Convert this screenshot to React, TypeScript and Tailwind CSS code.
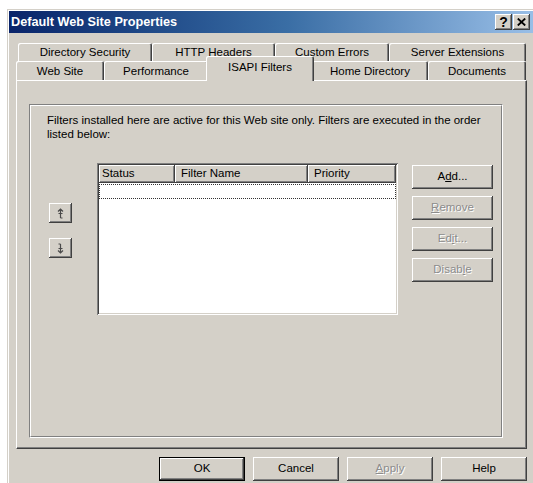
import React from "react";

// 3D bevels used by the classic dialog controls
const RAISED =
	"shadow-[inset_-1px_-1px_#404040,inset_1px_1px_#ffffff,inset_-2px_-2px_#808080]";
const DEFAULT_BTN =
	"shadow-[inset_0_0_0_1px_#000000,inset_-2px_-2px_#404040,inset_2px_2px_#ffffff,inset_-3px_-3px_#808080]";
const SUNKEN =
	"shadow-[inset_1px_1px_#808080,inset_-1px_-1px_#ffffff,inset_2px_2px_#404040,inset_-2px_-2px_#d4d0c8]";
const DISABLED = "text-[#8c8c8c] [text-shadow:1px_1px_0_#ffffff]";

const BACK_TABS = [
	{ label: "Directory Security", w: "w-[134px]" },
	{ label: "HTTP Headers", w: "w-[123px]" },
	{ label: "Custom Errors", w: "w-[114px]" },
	{ label: "Server Extensions", w: "w-[137px]" },
];

const FRONT_TABS = [
	{ label: "Web Site", w: "w-[88px]" },
	{ label: "Performance", w: "w-[104px]" },
	{ label: "ISAPI Filters", w: "w-[104px]", active: true },
	{ label: "Home Directory", w: "w-[116px]" },
	{ label: "Documents", w: "w-[98px]" },
];

function Tab({ label, w, active }: { label: string; w: string; active?: boolean }) {
	if (active) {
		return (
			<div
				className={`${w} relative z-10 -mx-[2px] -mt-[2px] -mb-px h-[22px] box-content px-[2px] bg-[#d4d0c8] rounded-t-[2px] shadow-[inset_1px_1px_#ffffff,inset_-1px_0_#404040,inset_-2px_0_#808080] flex justify-center pt-[3px]`}
			>
				{label}
			</div>
		);
	}
	return (
		<div
			className={`${w} h-full bg-[#d4d0c8] rounded-t-[2px] shadow-[inset_1px_1px_#ffffff,inset_-1px_0_#404040,inset_-2px_0_#808080] flex items-center justify-center pt-[2px]`}
		>
			{label}
		</div>
	);
}

function Btn({
	children,
	className = "",
	disabled,
	isDefault,
}: {
	children: React.ReactNode;
	className?: string;
	disabled?: boolean;
	isDefault?: boolean;
}) {
	return (
		<div
			className={`h-[24px] flex items-center justify-center bg-[#d4d0c8] ${isDefault ? DEFAULT_BTN : RAISED} ${disabled ? DISABLED : "text-black"} ${className}`}
		>
			{children}
		</div>
	);
}

function Arrow({ down }: { down?: boolean }) {
	return (
		<svg width="7" height="11" viewBox="0 0 7 11" className={down ? "rotate-180" : ""}>
			<path
				d="M3.5 1 V10 M1 3.5 L3.5 1 L6 3.5 M1.5 5.5 H5.5 M3.5 10 H5.5"
				stroke="#4a4a4a"
				strokeWidth="1.2"
				fill="none"
			/>
		</svg>
	);
}

function CaptionButton({ children }: { children: React.ReactNode }) {
	return (
		<div
			className={`w-[17px] h-[16px] bg-[#d4d0c8] ${RAISED} flex items-center justify-center text-[14px] font-bold leading-none text-black`}
		>
			{children}
		</div>
	);
}

export default function App() {
	return (
		<div className="w-[533px] h-[483px] overflow-hidden bg-white pt-[9px] pl-[7px] font-['Liberation_Sans',Arial,sans-serif] text-[11.5px] text-black">
			<div className="w-[560px] h-[520px] bg-[#d4d0c8] border-l border-t border-[#d4d0c8]">
				<div className="h-full border-l border-t border-white">
					{/* Caption */}
					<div className="h-[22px] bg-linear-to-r from-[#0a246a] via-[#3a6ea5] to-[#a6caf0] flex items-center pl-[2px] pr-[37px]">
						<span className="text-white font-bold text-[12.7px] pt-[2px]">Default Web Site Properties</span>
						<div className="ml-auto flex gap-[1px]">
							<CaptionButton>?</CaptionButton>
							<CaptionButton>
								<svg width="9" height="8" viewBox="0 0 9 8">
									<path d="M0.8 0.5 L8.2 7.5 M8.2 0.5 L0.8 7.5" stroke="#000" strokeWidth="1.8" />
								</svg>
							</CaptionButton>
						</div>
					</div>

					{/* Tab strip */}
					<div className="pt-[10px]">
						<div className="ml-[9px] h-[18px] flex">
							{BACK_TABS.map((t) => (
								<Tab key={t.label} label={t.label} w={t.w} />
							))}
						</div>
						<div className="ml-[7px] h-[19px] flex items-end">
							{FRONT_TABS.map((t) => (
								<Tab key={t.label} label={t.label} w={t.w} active={t.active} />
							))}
						</div>

						{/* Tab page */}
						<div className="ml-[7px] w-[511px] h-[369px] border-l border-t border-white border-r border-b border-r-[#404040] border-b-[#404040]">
							<div className="h-full border-r border-b border-[#808080] pl-[12px] pt-[23px] pr-[22px] pb-[9px] flex">
								<div className="flex-1 border-t border-l border-[#808080] border-r border-b border-r-white border-b-white">
									<div className="h-full border-t border-l border-white border-r border-b border-r-[#808080] border-b-[#808080] pl-[16px] pt-[7px]">
										<p className="leading-[14px]">
											Filters installed here are active for this Web site only. Filters are executed in the order
											<br />
											listed below:
										</p>

										<div className="mt-[22px] pl-[2px] flex items-start">
											{/* Move up / down */}
											<div className="w-[23px] pt-[40px] flex flex-col gap-[15px]">
												<Btn className="h-[20px]!">
													<Arrow />
												</Btn>
												<Btn className="h-[20px]!">
													<Arrow down />
												</Btn>
											</div>

											{/* Filter list */}
											<div className={`ml-[25px] w-[301px] h-[152px] bg-white p-[2px] ${SUNKEN}`}>
												<div className="flex h-[18px] bg-[#d4d0c8]">
													<div className={`w-[76px] pl-[3px] flex items-center ${RAISED}`}>Status</div>
													<div className={`w-[133px] pl-[6px] flex items-center ${RAISED}`}>Filter Name</div>
													<div className={`w-[88px] pl-[6px] flex items-center ${RAISED}`}>Priority</div>
												</div>
												<div className="mt-px h-[15px] border border-dotted border-[#333]" />
											</div>

											{/* Actions */}
											<div className="ml-[14px] pt-[2px] w-[81px] flex flex-col gap-[7px]">
												<Btn>
													A<span className="underline">d</span>d...
												</Btn>
												<Btn disabled>
													<span className="underline">R</span>emove
												</Btn>
												<Btn disabled>
													Ed<span className="underline">i</span>t...
												</Btn>
												<Btn disabled>
													Disab<span className="underline">l</span>e
												</Btn>
											</div>
										</div>
									</div>
								</div>
							</div>
						</div>

						{/* Dialog buttons */}
						<div className="ml-[7px] w-[511px] mt-[8px] flex justify-end gap-[8px]">
							<Btn isDefault className="w-[86px]">
								OK
							</Btn>
							<Btn className="w-[86px]">Cancel</Btn>
							<Btn disabled className="w-[86px]">
								<span className="underline">A</span>pply
							</Btn>
							<Btn className="w-[86px]">Help</Btn>
						</div>
					</div>
				</div>
			</div>
		</div>
	);
}
